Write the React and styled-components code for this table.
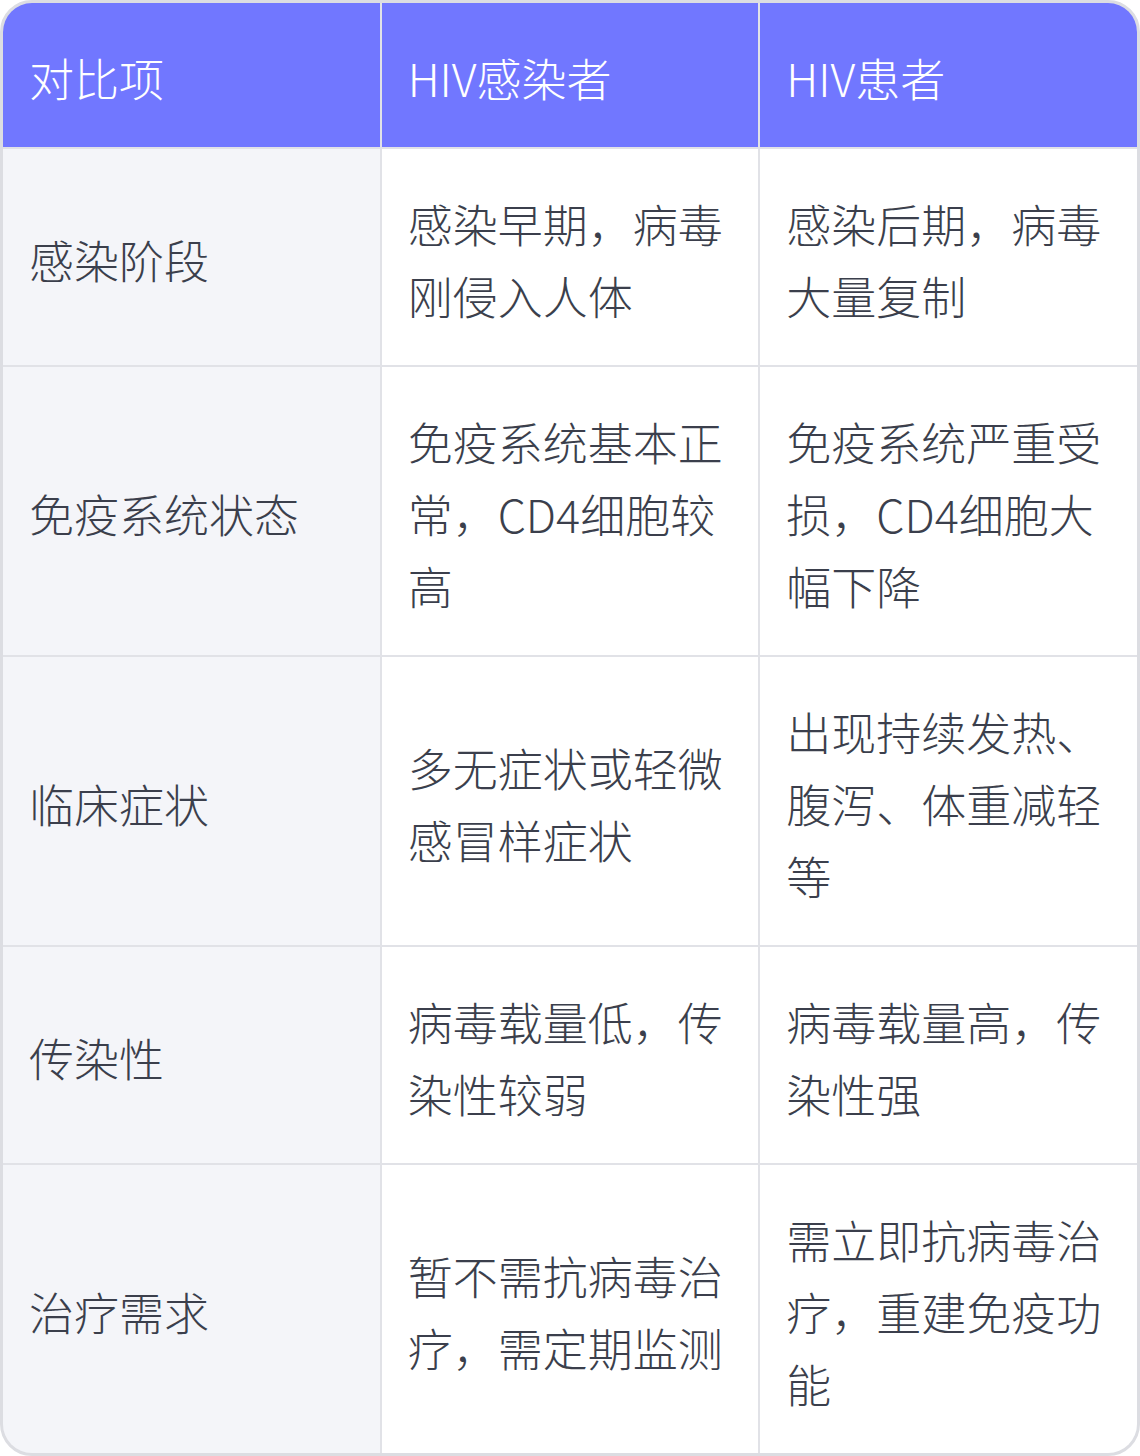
import React from "react";
import styled, { createGlobalStyle } from "styled-components";

const GlobalStyle = createGlobalStyle`
  html, body {
    margin: 0;
    padding: 0;
    background: #ffffff;
  }
`;

const Table = styled.div`
  width: 1140px;
  box-sizing: border-box;
  display: grid;
  grid-template-columns: 1fr 1fr 1fr;
  gap: 2px;
  background: #e1e2e7;
  border: 3px solid #dcdde2;
  border-radius: 32px;
  overflow: hidden;
  font-family: "Noto Sans CJK SC", "Noto Sans", sans-serif;
  font-weight: 300;
  font-size: 45px;
  line-height: 72px;
`;

const Cell = styled.div`
  display: flex;
  align-items: center;
  padding: 39px 26px 33px;
  min-height: 72px;
  color: ${(p) => (p.$head ? "#ffffff" : "#3b3f4c")};
  background: ${(p) => (p.$head ? "#7177ff" : p.$label ? "#f4f5f9" : "#ffffff")};
`;

const header = ["对比项", "HIV感染者", "HIV患者"];

const rows = [
  ["感染阶段", "感染早期，病毒刚侵入人体", "感染后期，病毒大量复制"],
  ["免疫系统状态", "免疫系统基本正常，CD4细胞较高", "免疫系统严重受损，CD4细胞大幅下降"],
  ["临床症状", "多无症状或轻微感冒样症状", "出现持续发热、腹泻、体重减轻等"],
  ["传染性", "病毒载量低，传染性较弱", "病毒载量高，传染性强"],
  ["治疗需求", "暂不需抗病毒治疗，需定期监测", "需立即抗病毒治疗，重建免疫功能"],
];

const App = () => {
  return (
    <>
      <GlobalStyle />
      <Table>
        {header.map((h, i) => (
          <Cell $head key={i}>
            {h}
          </Cell>
        ))}
        {rows.map((row, r) =>
          row.map((text, c) => (
            <Cell key={`${r}-${c}`} $label={c === 0}>
              {text}
            </Cell>
          ))
        )}
      </Table>
    </>
  );
};

export default App;
